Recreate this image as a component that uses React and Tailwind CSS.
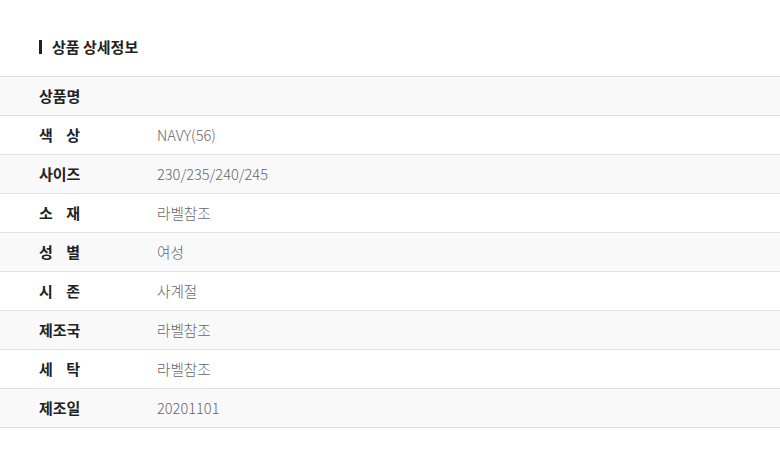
export default function App() {
  const rows = [
    ["상품명", ""],
    [["색", "상"], "NAVY(56)"],
    ["사이즈", "230/235/240/245"],
    [["소", "재"], "라벨참조"],
    [["성", "별"], "여성"],
    [["시", "존"], "사계절"],
    ["제조국", "라벨참조"],
    [["세", "탁"], "라벨참조"],
    ["제조일", "20201101"],
  ];
  return (
    <div
      className="w-[780px] h-[466px] bg-white"
      style={{ fontFamily: '"Noto Sans CJK KR", "Noto Sans", sans-serif' }}
    >
      <div className="pt-[37px] pl-[39px] flex items-center h-[57px]">
        <div className="w-[3px] h-[14px] bg-[#222]" />
        <div className="ml-[10px] text-[15px] font-bold text-[#222] leading-[20px]">
          상품 상세정보
        </div>
      </div>
      <div className="mt-[19px] border-t border-[#e2e2e2]">
        {rows.map(([label, value], i) => (
          <div
            key={i}
            className={`grid grid-cols-[157px_1fr] items-center h-[39px] border-b border-[#e2e2e2] ${
              i % 2 === 0 ? "bg-[#f9f9f9]" : "bg-white"
            }`}
          >
            <div className="pl-[39px] text-[15px] font-bold text-[#222] leading-[20px]">
              {Array.isArray(label) ? (
                <div className="flex justify-between w-[41px]">
                  <span>{label[0]}</span>
                  <span>{label[1]}</span>
                </div>
              ) : (
                <span>{label}</span>
              )}
            </div>
            <div className="text-[14.6px] text-[#666] leading-[20px] font-light">
              {value}
            </div>
          </div>
        ))}
      </div>
    </div>
  );
}
